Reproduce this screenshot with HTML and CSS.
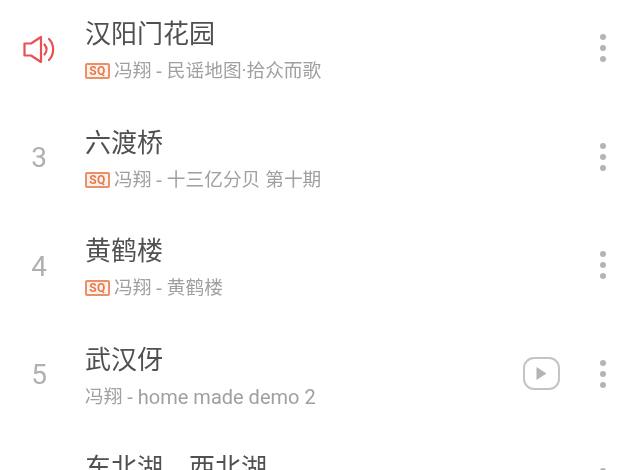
FILE: index.html
```html
<!DOCTYPE html>
<html>
<head>
  <title>Song list</title>
  <link rel="stylesheet" href="styles.css">
</head>
<body>
  <div class="song-list">

    <div class="song">
      <div class="song-index">
        <svg class="speaker" width="33" height="29" viewBox="0 0 33 29" fill="none" stroke="#ea5050" stroke-width="2.200" stroke-linejoin="round" stroke-linecap="round">
          <path d="M1.500 8.500h6.500L18 2v25L8 20.500H1.500z"/>
          <path d="M21.500 9.500c2.500 3 2.500 7 0 10"/>
          <path d="M26 4c5.500 5.500 5.500 15.500 0 21"/>
        </svg>
      </div>
      <div class="song-info">
        <div class="song-title">汉阳门花园</div>
        <div class="song-sub"><span class="badge">SQ</span>冯翔<span class="latin"> - </span>民谣地图·拾众而歌</div>
      </div>
      <div class="more"><span></span><span></span><span></span></div>
    </div>

    <div class="song">
      <div class="song-index">3</div>
      <div class="song-info">
        <div class="song-title">六渡桥</div>
        <div class="song-sub"><span class="badge">SQ</span>冯翔<span class="latin"> - </span>十三亿分贝<span class="latin">&nbsp;</span>第十期</div>
      </div>
      <div class="more"><span></span><span></span><span></span></div>
    </div>

    <div class="song">
      <div class="song-index">4</div>
      <div class="song-info">
        <div class="song-title">黄鹤楼</div>
        <div class="song-sub"><span class="badge">SQ</span>冯翔<span class="latin"> - </span>黄鹤楼</div>
      </div>
      <div class="more"><span></span><span></span><span></span></div>
    </div>

    <div class="song">
      <div class="song-index">5</div>
      <div class="song-info">
        <div class="song-title">武汉伢</div>
        <div class="song-sub">冯翔<span class="latin"> - home made demo 2</span></div>
      </div>
      <div class="mv">
        <svg width="37" height="33" viewBox="0 0 37 33" fill="none">
          <rect x="1" y="1" width="35" height="31" rx="10" stroke="#c4c4c4" stroke-width="2"/>
          <path d="M13.500 10l10 6.500-10 6.500z" fill="#b4b4b4"/>
        </svg>
      </div>
      <div class="more"><span></span><span></span><span></span></div>
    </div>

    <div class="song">
      <div class="song-index"></div>
      <div class="song-info">
        <div class="song-title">东北湖，西北湖</div>
        <div class="song-sub"></div>
      </div>
      <div class="more"><span></span><span></span><span></span></div>
    </div>

  </div>
</body>
</html>
```

FILE: styles.css
```css
html, body { margin: 0; padding: 0; height: 470px; overflow: hidden; background: #fff; }
body { font-family: "Roboto", "Noto Sans CJK SC", sans-serif; }

.song-list { margin-top: -6px; filter: blur(0.5px); }
.song { display: flex; align-items: center; height: 108.500px; }

.song-index { width: 78px; padding-top: 2px; text-align: center; font-size: 28px; color: #b0b0b0; flex-shrink: 0; }
.speaker { display: block; margin-left: 23px; }
.song-info { flex: 1; margin-left: 7px; padding-top: 6px; }
.song-title { font-size: 26px; line-height: 34px; color: #505050; }
.song-sub { display: flex; align-items: center; min-height: 28px; margin-top: 6px; font-size: 18.700px; line-height: 28px; color: #a0a0a0; white-space: pre; }
.latin { font-size: 20px; }

.badge {
  box-sizing: border-box; width: 25px; height: 16px; margin-right: 4px;
  border: 2px solid #ec8f66; border-radius: 2px;
  font-size: 12px; line-height: 12px; font-weight: 700; text-align: center; letter-spacing: 0.500px;
  color: #e8794a; background: #fdf3ee;
}

.mv { margin-right: 40px; line-height: 0; }
.more { display: flex; flex-direction: column; gap: 5px; width: 6px; margin-right: 21px; }
.more span { width: 6px; height: 6px; border-radius: 50%; background: #b4b4b4; }
```
